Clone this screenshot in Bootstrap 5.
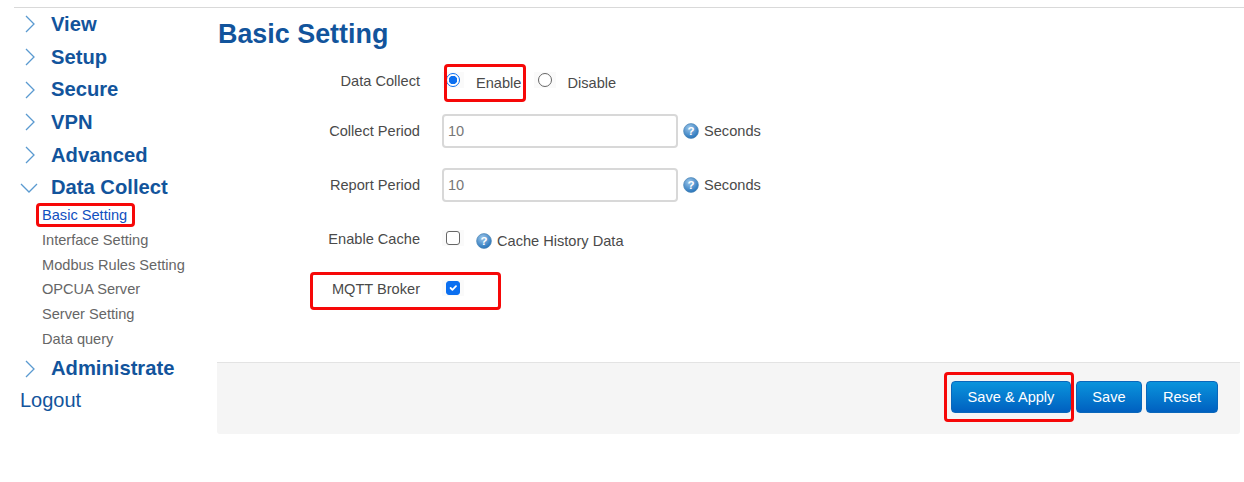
<!DOCTYPE html>
<html lang="en"><head><meta charset="utf-8"><title>Basic Setting</title>
<link href="https://cdn.jsdelivr.net/npm/bootstrap@5.3.0/dist/css/bootstrap.min.css" rel="stylesheet">
<style>
html,body{height:100%;}
body{font-family:"Liberation Sans",Arial,sans-serif;background:#fff;color:#404040;overflow:hidden;}
.svg-defs{position:absolute;width:0;height:0;}
.page-wrap{position:relative;height:482px;padding:7px 0 0 14px;}
.page-rule{border-top:1px solid #d9d9d9;}
.side-col{width:200px;flex:none;}
.top-item{height:32.7px;font-size:20.2px;font-weight:700;color:#12549c;line-height:32.7px;text-decoration:none;}
.top-arrow{width:37px;flex:none;display:flex;align-items:center;padding-left:10px;}
.top-arrow-open{padding-left:5px;}
.sub-list{padding:0 0 1px 28px;margin:-1px 0 0;list-style:none;}
.sub-list a{display:block;height:24.7px;line-height:24.7px;font-size:14.6px;color:#666;text-decoration:none;}
.sub-list a.on{color:#0f4fc0;}
.logout-link{display:block;padding-left:6px;font-size:20px;line-height:32px;margin-top:-1px;color:#12549c;text-decoration:none;}
.main-col{flex:1;min-width:0;}
.page-title{font-size:26.9px;font-weight:700;color:#12549c;margin:9px 0 0 4px;line-height:34px;}
.form-area{height:311px;padding-top:12px;}
.set-row{display:flex;align-items:center;}
.set-label{width:206px;text-align:right;flex:none;font-size:14.6px;color:#4a4a4a;margin:0;}
.set-ctl{margin-left:22px;display:flex;align-items:center;font-size:14.6px;color:#4a4a4a;}
.rw-1{height:41px;}.rw-2,.rw-3{height:54px;}.rw-4{height:56px;}.rw-5{height:44px;}
.rw-1 .set-label{margin-bottom:4px;}
.rw-1 .opt-text{margin-top:1px;}
.rw-2 .set-label,.rw-3 .set-label{margin-top:1px;}
.rw-2 .opt-text,.rw-3 .opt-text{margin-top:1px;}
.rw-4 .set-label{margin-bottom:1px;}
.rw-4 .opt-text,.rw-4 .help-dot{margin-top:3px;}
.rw-5 .set-label{margin-bottom:1px;}
.pick-cell{width:22px;height:16px;flex:none;display:flex;justify-content:center;align-items:center;background:#fafafa;margin-bottom:4px;}
.rw-1 .pick-cell{margin-bottom:6px;}
.num-input{width:236px;height:34px;border:2px solid #d8d8d8;border-radius:4px;padding:0 4px;font-size:14.6px;color:#777;font-family:inherit;background:#fff;}
.help-dot{width:16px;height:16px;flex:none;margin-left:5px;}
.help-gap{margin-left:12px;}
.opt-text{margin-left:5px;}
.rw-1 .opt-first{margin-left:12px;margin-right:13px;}
.rw-1 .opt-gap{margin-left:11px;}
.form-check-input.pick{width:14px;height:14px;margin:0;border:1px solid #666;float:none;}
.form-check-input.pick[type=checkbox]{border-radius:3px;}
.form-check-input.pick[type=checkbox]:checked{background-color:#0b6ff0;border-color:#0b6ff0;}
.form-check-input.pick[type=radio]:checked{background:radial-gradient(circle,#0b6ff0 0 4px,#fff 4.5px);border:1.5px solid #0b6ff0;}
.foot-bar{background:#f5f5f5;border-top:1px solid #e3e3e3;height:72px;margin-right:4px;margin-left:3px;padding:18px 22px 0 0;border-radius:0 0 3px 3px;}
.act-btn{height:32px;border:1px solid #0a67bb;border-radius:4px;background:linear-gradient(#0a94dc,#0060c0);color:#fff;font-size:14.6px;padding:0;line-height:1;}
.btn-apply{width:120px;margin-right:1px;}.btn-save{width:66px;}.btn-reset{width:72px;}
.mark-box{position:absolute;border:3px solid #f60808;border-radius:4px;pointer-events:none;}
.mk-a{left:36px;top:203px;width:99px;height:24px;}
.mk-b{left:444px;top:64px;width:82px;height:38px;}
.mk-c{left:310px;top:272px;width:191px;height:38px;}
.mk-d{left:944px;top:372px;width:130px;height:50px;}
</style></head><body>
<svg class="svg-defs"><defs>
<radialGradient id="hg" cx="40%" cy="30%" r="75%"><stop offset="0" stop-color="#9cc6ea"/><stop offset="1" stop-color="#1f6fb8"/></radialGradient>
<symbol id="help" viewBox="0 0 16 16"><circle cx="8" cy="8" r="7.4" fill="url(#hg)" stroke="#4f86b4" stroke-width=".7"/><text x="8" y="12" font-size="11.5" font-weight="700" text-anchor="middle" fill="#fff" font-family="Liberation Sans">?</text></symbol>
<symbol id="arr-r" viewBox="0 0 12 20"><path d="M2 2l8 8-8 8" fill="none" stroke="#5a9ad0" stroke-width="1.3"/></symbol>
<symbol id="arr-d" viewBox="0 0 20 12"><path d="M2 2l8 8 8-8" fill="none" stroke="#5a9ad0" stroke-width="1.3"/></symbol>
</defs></svg>
<div class="page-wrap">
<div class="page-rule d-flex">
<nav class="side-col">
<a href="#" class="top-item d-flex"><span class="top-arrow"><svg width="12" height="20"><use href="#arr-r"/></svg></span>View</a>
<a href="#" class="top-item d-flex"><span class="top-arrow"><svg width="12" height="20"><use href="#arr-r"/></svg></span>Setup</a>
<a href="#" class="top-item d-flex"><span class="top-arrow"><svg width="12" height="20"><use href="#arr-r"/></svg></span>Secure</a>
<a href="#" class="top-item d-flex"><span class="top-arrow"><svg width="12" height="20"><use href="#arr-r"/></svg></span>VPN</a>
<a href="#" class="top-item d-flex"><span class="top-arrow"><svg width="12" height="20"><use href="#arr-r"/></svg></span>Advanced</a>
<a href="#" class="top-item d-flex"><span class="top-arrow top-arrow-open"><svg width="20" height="12"><use href="#arr-d"/></svg></span>Data Collect</a>
<ul class="sub-list">
<li><a href="#" class="on">Basic Setting</a></li>
<li><a href="#">Interface Setting</a></li>
<li><a href="#">Modbus Rules Setting</a></li>
<li><a href="#">OPCUA Server</a></li>
<li><a href="#">Server Setting</a></li>
<li><a href="#">Data query</a></li>
</ul>
<a href="#" class="top-item d-flex"><span class="top-arrow"><svg width="12" height="20"><use href="#arr-r"/></svg></span>Administrate</a>
<a href="#" class="logout-link">Logout</a>
</nav>
<main class="main-col">
<h1 class="page-title">Basic Setting</h1>
<div class="form-area">
<div class="set-row rw-1"><label class="set-label">Data Collect</label><div class="set-ctl">
<span class="pick-cell"><input class="form-check-input pick" type="radio" name="dc" checked aria-label="Enable"></span><span class="opt-text opt-first">Enable</span>
<span class="pick-cell"><input class="form-check-input pick" type="radio" name="dc" aria-label="Disable"></span><span class="opt-text opt-gap">Disable</span></div></div>
<div class="set-row rw-2"><label class="set-label">Collect Period</label><div class="set-ctl"><input class="num-input" value="10" aria-label="Collect Period"><svg class="help-dot"><use href="#help"/></svg><span class="opt-text">Seconds</span></div></div>
<div class="set-row rw-3"><label class="set-label">Report Period</label><div class="set-ctl"><input class="num-input" value="10" aria-label="Report Period"><svg class="help-dot"><use href="#help"/></svg><span class="opt-text">Seconds</span></div></div>
<div class="set-row rw-4"><label class="set-label">Enable Cache</label><div class="set-ctl"><span class="pick-cell"><input class="form-check-input pick" type="checkbox" aria-label="Enable Cache"></span><svg class="help-dot help-gap"><use href="#help"/></svg><span class="opt-text">Cache History Data</span></div></div>
<div class="set-row rw-5"><label class="set-label">MQTT Broker</label><div class="set-ctl"><span class="pick-cell"><input class="form-check-input pick" type="checkbox" checked aria-label="MQTT Broker"></span></div></div>
</div>
<div class="foot-bar d-flex justify-content-end gap-1">
<button class="act-btn btn-apply">Save &amp; Apply</button>
<button class="act-btn btn-save">Save</button>
<button class="act-btn btn-reset">Reset</button>
</div>
</main>
</div>
<div class="mark-box mk-a"></div>
<div class="mark-box mk-b"></div>
<div class="mark-box mk-c"></div>
<div class="mark-box mk-d"></div>
</div>
</body></html>
